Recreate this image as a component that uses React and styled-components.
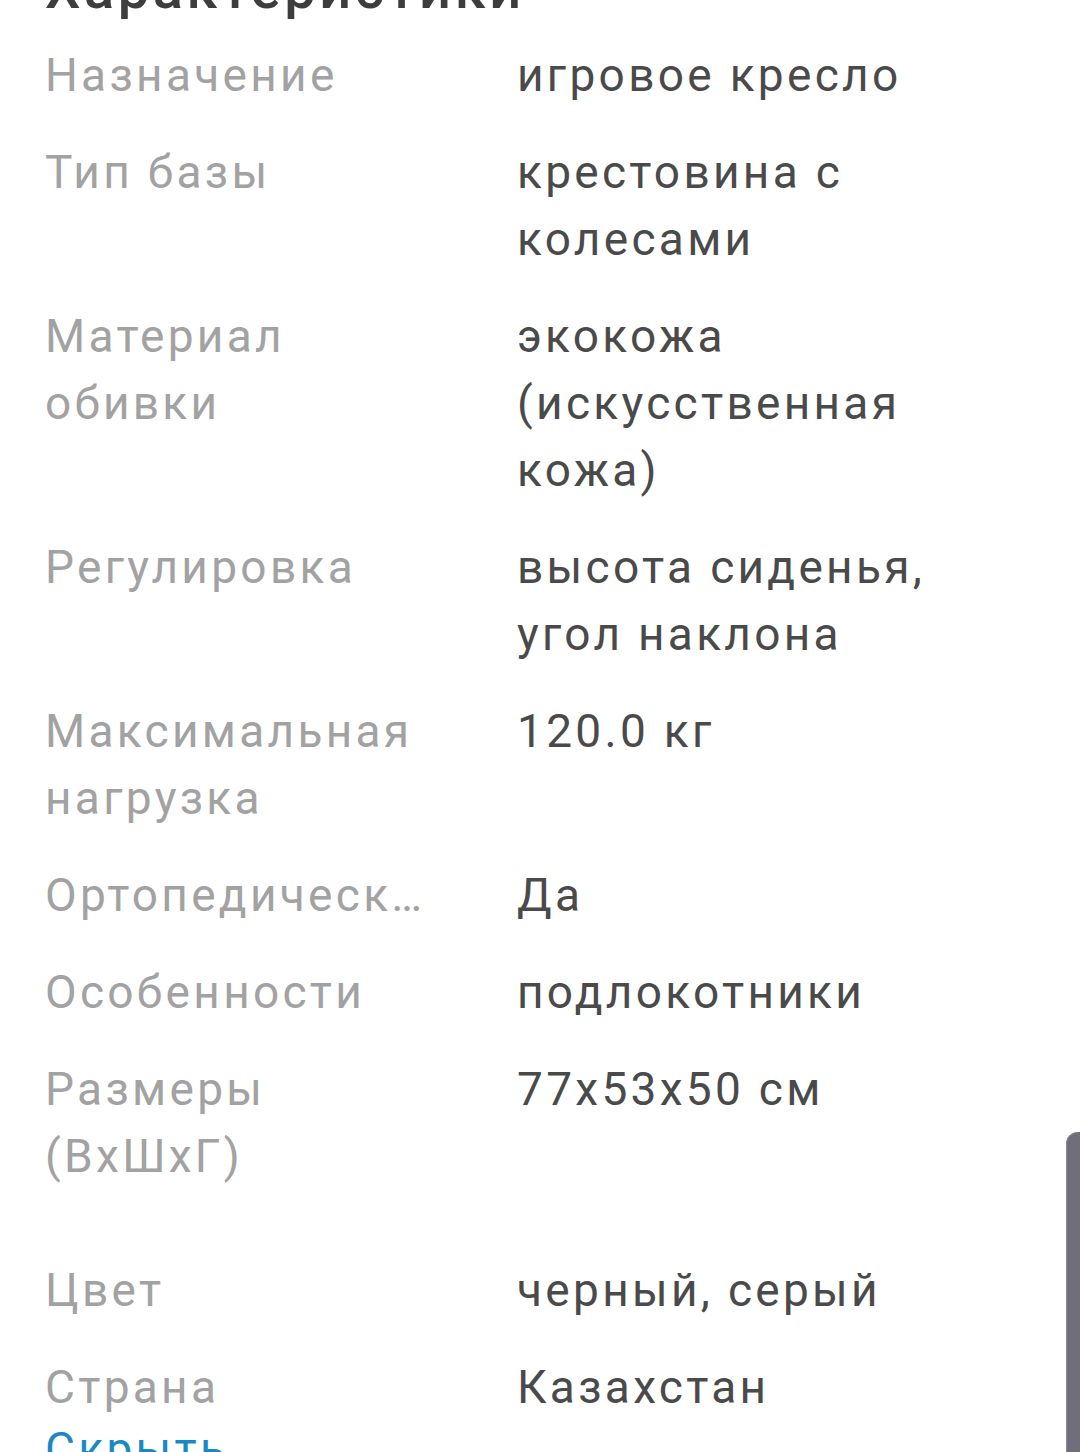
import React from "react";
import styled, { createGlobalStyle } from "styled-components";

const Global = createGlobalStyle`
  html, body {
    margin: 0;
    padding: 0;
    background: #ffffff;
    overflow: hidden;
  }
  body {
    font-family: Roboto, "Noto Sans", "Liberation Sans", sans-serif;
    -webkit-font-smoothing: antialiased;
  }
`;

const Screen = styled.div`
  position: relative;
  width: 1080px;
  height: 1452px;
  overflow: hidden;
  background: #ffffff;
`;

const Content = styled.section`
  display: flex;
  flex-direction: column;
  padding: 0 83px 0 45px;
  margin-top: -43px;
`;

const Heading = styled.h2`
  margin: 0 0 21px;
  font-size: 56px;
  line-height: 64px;
  font-weight: 500;
  color: #3d3d3d;
  letter-spacing: 3.6px;
`;

const SpecList = styled.dl`
  margin: 0;
  display: flex;
  flex-direction: column;
  gap: 30px;
`;

const Row = styled.div`
  display: grid;
  grid-template-columns: 400px 1fr;
  column-gap: 72px;
  font-size: 46px;
  line-height: 67px;
  letter-spacing: 3.3px;
  margin-bottom: ${(p) => (p.$extra ? `${p.$extra}px` : "0")};
`;

const Label = styled.dt`
  margin: 0;
  color: #a2a2a2;
  overflow: hidden;
  text-overflow: ellipsis;
`;

const Value = styled.dd`
  margin: 0;
  color: #4a4a4a;
`;

const HideLink = styled.a`
  display: block;
  margin-top: -5px;
  font-size: 46px;
  line-height: 67px;
  letter-spacing: 3.3px;
  color: #1b88c3;
  text-decoration: none;
`;

const ScrollThumb = styled.div`
  position: absolute;
  right: 0;
  top: 1132px;
  width: 14px;
  height: 340px;
  background: #6f6e7a;
  border-top-left-radius: 12px;
  box-shadow: inset 1px 0 0 #8d8c97;
`;

const specs = [
  { label: "Назначение", value: "игровое кресло" },
  { label: "Тип базы", value: "крестовина с колесами" },
  { label: "Материал обивки", value: "экокожа (искусственная кожа)" },
  { label: "Регулировка", value: "высота сиденья, угол наклона" },
  { label: "Максимальная нагрузка", value: "120.0 кг" },
  { label: "Ортопедический", value: "Да" },
  { label: "Особенности", value: "подлокотники" },
  { label: "Размеры (ВхШхГ)", value: "77x53x50 см", extra: 37 },
  { label: "Цвет", value: "черный, серый" },
  { label: "Страна", value: "Казахстан" },
];

export default function App() {
  return (
    <Screen>
      <Global />
      <Content>
        <Heading>Характеристики</Heading>
        <SpecList>
          {specs.map((s) => (
            <Row key={s.label} $extra={s.extra}>
              <Label>{s.label}</Label>
              <Value>{s.value}</Value>
            </Row>
          ))}
        </SpecList>
        <HideLink href="#">Скрыть</HideLink>
      </Content>
      <ScrollThumb />
    </Screen>
  );
}
